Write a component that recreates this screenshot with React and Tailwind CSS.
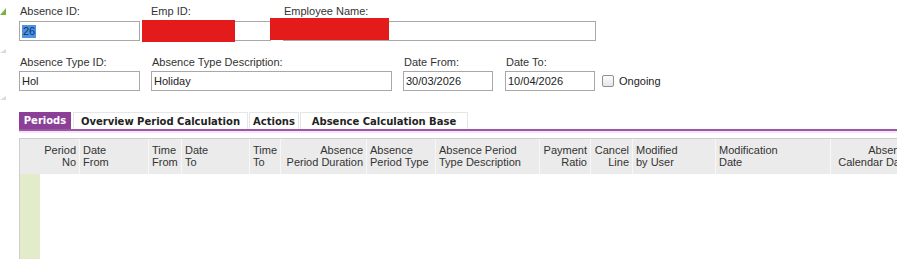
import React from "react"

const columns = [
  { w: 39, top: "Period", bottom: "No", right: true, first: true },
  { w: 69, top: "Date", bottom: "From" },
  { w: 33, top: "Time", bottom: "From" },
  { w: 68, top: "Date", bottom: "To" },
  { w: 31, top: "Time", bottom: "To" },
  { w: 86, top: "Absence", bottom: "Period Duration", right: true },
  { w: 69, top: "Absence", bottom: "Period Type" },
  { w: 104, top: "Absence Period", bottom: "Type Description" },
  { w: 51, top: "Payment", bottom: "Ratio", right: true },
  { w: 42, top: "Cancel", bottom: "Line", right: true },
  { w: 83, top: "Modified", bottom: "by User" },
  { w: 115, top: "Modification", bottom: "Date" },
  { w: 84, top: "Absence", bottom: "Calendar Days", right: true },
]

const tabs = [
  { label: "Periods", w: "w-[52px]", ml: "ml-0", active: true },
  { label: "Overview Period Calculation", w: "w-[175px]", ml: "ml-[2px]" },
  { label: "Actions", w: "w-[50px]", ml: "ml-[1px]" },
  { label: "Absence Calculation Base", w: "w-[168px]", ml: "ml-[1px]" },
]

function Mark({ color, className, h = 8 }) {
  return (
    <svg width="6" height={h} viewBox={`0 0 6 ${h}`} className={`block ${className}`}>
      <polygon points={`0,${h} 6,1 6,${h}`} fill={color} />
    </svg>
  )
}

function Field({ label, className, gap, children }) {
  return (
    <div className={`flex flex-col shrink-0 ${className}`}>
      <div className={`h-[14px] leading-[14px] pl-[1px] text-[11px] text-[#333] whitespace-nowrap ${gap}`}>{label}</div>
      {children}
    </div>
  )
}

function Input({ value, redact }) {
  return (
    <div className="relative h-[20px] border border-[#a8a8a8] bg-white pl-[2px] flex items-center text-[11px] text-[#222]">
      {value}
      {redact}
    </div>
  )
}

export default function App() {
  return (
    <div className="w-[897px] h-[259px] overflow-hidden bg-white font-['Liberation_Sans',Arial,sans-serif]">
      <div className="flex">
        {/* left gutter marks */}
        <div className="w-[19px] shrink-0 flex flex-col items-start">
          <Mark color="#7cb342" className="mt-[7px]" />
          <Mark color="#dadada" h={5} className="mt-[33px]" />
          <Mark color="#dadada" h={5} className="mt-[42px]" />
        </div>

        <div className="flex flex-col">
          {/* row 1 */}
          <div className="flex pt-[4px]">
            <Field label="Absence ID:" className="w-[121px]" gap="mb-[3px]">
              <Input
                value={<span className="bg-[#4d93df] text-[#0e3570] px-[1px] leading-[13px]">26</span>}
              />
            </Field>
            <Field label="Emp ID:" className="w-[121px] ml-[10px]" gap="mb-[3px]">
              <Input
                value=""
                redact={<div className="absolute left-[-9px] top-[-2px] w-[93px] h-[22px] bg-[#e31b1b]" />}
              />
            </Field>
            <Field label="Employee Name:" className="w-[313px] ml-[12px]" gap="mb-[3px]">
              <Input
                value=""
                redact={<div className="absolute left-[-14px] top-[-4px] w-[119px] h-[22px] bg-[#e31b1b]" />}
              />
            </Field>
          </div>

          {/* row 2 */}
          <div className="flex items-end mt-[14px]">
            <Field label="Absence Type ID:" className="w-[121px]" gap="mb-[2px]">
              <Input value="Hol" />
            </Field>
            <Field label="Absence Type Description:" className="w-[241px] ml-[11px]" gap="mb-[2px]">
              <Input value="Holiday" />
            </Field>
            <Field label="Date From:" className="w-[90px] ml-[11px]" gap="mb-[2px]">
              <Input value="30/03/2026" />
            </Field>
            <Field label="Date To:" className="w-[90px] ml-[12px]" gap="mb-[2px]">
              <Input value="10/04/2026" />
            </Field>
            <div className="h-[20px] flex items-center ml-[7px]">
              <div className="w-[12px] h-[12px] rounded-[2px] border border-[#8f8f8f] bg-gradient-to-b from-[#fdfdfd] to-[#e6e6e6]" />
              <span className="ml-[5px] text-[11px] text-[#222]">Ongoing</span>
            </div>
          </div>
        </div>
      </div>

      {/* tabs */}
      <div className="ml-[19px] mt-[12px]">
        <div className="flex h-[17px]">
          {tabs.map((t) => (
            <div
              key={t.label}
              className={`${t.w} ${t.ml} flex items-center justify-center font-['DejaVu_Sans',Verdana,sans-serif] font-bold text-[10px] whitespace-nowrap ${
                t.active
                  ? "bg-[#8b3f97] text-white"
                  : "bg-white text-[#222] border-t border-x border-[#e6e6e6]"
              }`}
            >
              {t.label}
            </div>
          ))}
        </div>
        <div className="h-[2px] bg-[#9d56a6]" />
        <div className="h-[2px] bg-[#f5e6f5]" />
      </div>

      {/* grid */}
      <div className="ml-[19px] mt-[5px] w-[895px] border-l border-t border-[#cdcdcd]">
        <div className="flex h-[35px] bg-[#ebebeb] text-[11px] leading-[12px] text-[#333]">
          <div className="w-[20px] shrink-0" />
          {columns.map((c, i) => (
            <div
              key={i}
              style={{ width: c.w }}
              className={`shrink-0 px-[3px] pt-[5px] whitespace-nowrap ${c.first ? "" : "border-l border-[#f7f7f7]"} ${
                c.right ? "text-right" : "text-left"
              }`}
            >
              <div>{c.top}</div>
              <div>{c.bottom}</div>
            </div>
          ))}
        </div>
        <div className="flex h-[90px]">
          <div className="w-[20px] bg-[#e3ecca]" />
          <div className="flex-1 bg-white" />
        </div>
      </div>
    </div>
  )
}
